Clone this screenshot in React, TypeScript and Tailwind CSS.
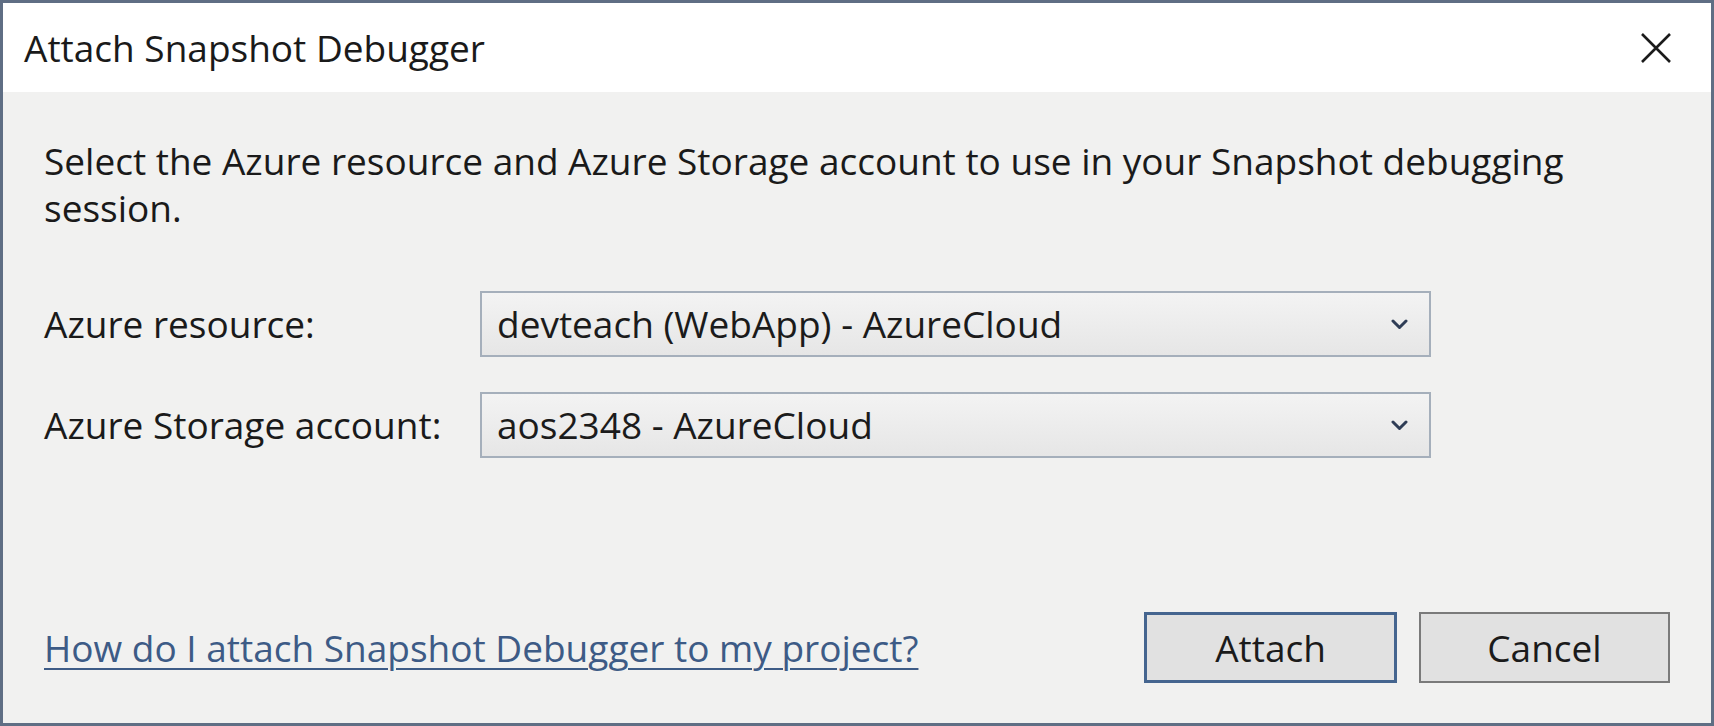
import React from "react";

const Chevron = () => (
  <svg width="17" height="11" viewBox="0 0 17 11" fill="none">
    <path d="M2 2 L8.5 8.5 L15 2" stroke="#2f3d56" strokeWidth="3" strokeLinecap="round" strokeLinejoin="round" />
  </svg>
);

const Dropdown = ({ value }: { value: string }) => (
  <div className="w-[951px] h-[66px] border-2 border-[#a5afbb] bg-gradient-to-b from-[#f3f3f3] to-[#e6e6e6] flex items-center justify-between pl-[15px] pr-[21px]">
    <span className="text-[#1b1b1b]">{value}</span>
    <Chevron />
  </div>
);

const App = () => {
  return (
    <div
      className="w-[1714px] h-[726px] border-[3px] border-[#5f6e84] bg-[#f1f1f0] flex flex-col text-[37px] text-[#1a1a1a]"
      style={{ fontFamily: '"Open Sans", "Noto Sans", sans-serif' }}
    >
      <div className="h-[89px] bg-white flex items-center justify-between pl-[21px] pr-[39px]">
        <span className="text-[37px]">Attach Snapshot Debugger</span>
        <svg width="32" height="32" viewBox="0 0 32 32">
          <path d="M2 2 L30 30 M30 2 L2 30" stroke="#1b1b1b" strokeWidth="2.6" />
        </svg>
      </div>

      <div className="px-[41px] pt-[45px] flex flex-col">
        <p className="leading-[47px] max-w-[1560px]">
          Select the Azure resource and Azure Storage account to use in your Snapshot debugging session.
        </p>

        <div className="mt-[60px] flex flex-col gap-[35px]">
          <div className="flex items-center">
            <span className="w-[436px]">Azure resource:</span>
            <Dropdown value="devteach (WebApp) - AzureCloud" />
          </div>
          <div className="flex items-center">
            <span className="w-[436px]">Azure Storage account:</span>
            <Dropdown value="aos2348 - AzureCloud" />
          </div>
        </div>
      </div>

      <div className="mt-auto flex items-center justify-between px-[41px] pb-[40px]">
        <a href="#" className="text-[#3d5b86] underline underline-offset-[6px] decoration-[2px]">
          How do I attach Snapshot Debugger to my project?
        </a>
        <div className="flex gap-[22px]">
          <button className="w-[253px] h-[71px] bg-[#e1e1e1] border-[3px] border-[#45658f] text-[#1b1b1b]">
            Attach
          </button>
          <button className="w-[251px] h-[71px] bg-[#e1e1e1] border-2 border-[#7a7a7a] text-[#1b1b1b]">
            Cancel
          </button>
        </div>
      </div>
    </div>
  );
};

export default App;
